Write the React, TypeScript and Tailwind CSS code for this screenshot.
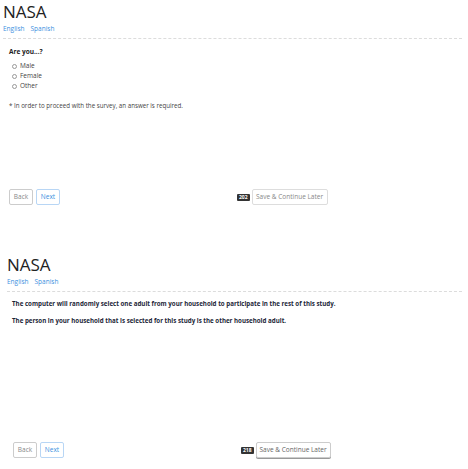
import React from "react";

function Header() {
  return (
    <div>
      <h1 className="text-[17px] leading-[20px] text-[#222] font-normal">NASA</h1>
      <div className="mt-[2px] flex gap-[6px] text-[6.5px] leading-[10px] text-[#3b8fe0]">
        <span>English</span>
        <span>Spanish</span>
      </div>
      <div className="mt-[4px] border-t border-dashed border-[#dcdcdc]" />
    </div>
  );
}

function Footer({ count, raised }: { count: string; raised?: boolean }) {
  return (
    <div className="mt-auto flex items-center pl-[6px]">
      <div className="flex gap-[3px]">
        <button className="h-[16px] w-[24px] rounded-[2px] border border-[#ccc] bg-white text-[6.5px] text-[#888]">
          Back
        </button>
        <button className="h-[16px] w-[24px] rounded-[2px] border border-[#b8d6f5] bg-white text-[6.5px] text-[#3b8fe0]">
          Next
        </button>
      </div>
      <div className="ml-[177px] flex items-center gap-[2px]">
        <span className="rounded-[1px] bg-[#333] px-[2px] text-[5px] leading-[7px] font-bold text-white">
          {count}
        </span>
        <button
          className={
            raised
              ? "h-[16px] w-[75px] rounded-[2px] border border-[#ccc] bg-white text-[6.5px] text-[#666] shadow-[0_1px_0_#999]"
              : "h-[16px] w-[76px] rounded-[2px] border border-[#ddd] bg-white text-[6.5px] text-[#888]"
          }
        >
          Save &amp; Continue Later
        </button>
      </div>
    </div>
  );
}

export default function App() {
  return (
    <div className="flex h-[469px] w-[468px] flex-col bg-white font-['Open_Sans',sans-serif]">
      <section className="flex h-[253px] flex-col pt-[2px] pr-[6px] pb-[48px] pl-[3px]">
        <Header />
        <div className="pl-[6px] pt-[8px] text-[#444]">
          <p className="text-[6.5px] leading-[10px] font-bold text-[#222]">Are you...?</p>
          <div className="mt-[4px] flex flex-col pl-[3px] text-[6.5px] leading-[10px]">
            {["Male", "Female", "Other"].map((o) => (
              <label key={o} className="flex items-center gap-[3px]">
                <span className="h-[5px] w-[5px] rounded-full border border-[#999]" />
                {o}
              </label>
            ))}
          </div>
          <p className="mt-[10px] text-[6.2px] leading-[10px] text-[#444]">
            * In order to proceed with the survey, an answer is required.
          </p>
        </div>
        <Footer count="202" />
      </section>
      <section className="flex h-[216px] flex-col pt-[2px] pr-[6px] pb-[11px] pl-[7px]">
        <Header />
        <div className="pl-[5px] pt-[3px] text-[6.2px] leading-[17px] font-bold text-[#1c2638]">
          <p>The computer will randomly select one adult from your household to participate in the rest of this study.</p>
          <p>The person in your household that is selected for this study is the other household adult.</p>
        </div>
        <Footer count="218" raised />
      </section>
    </div>
  );
}
